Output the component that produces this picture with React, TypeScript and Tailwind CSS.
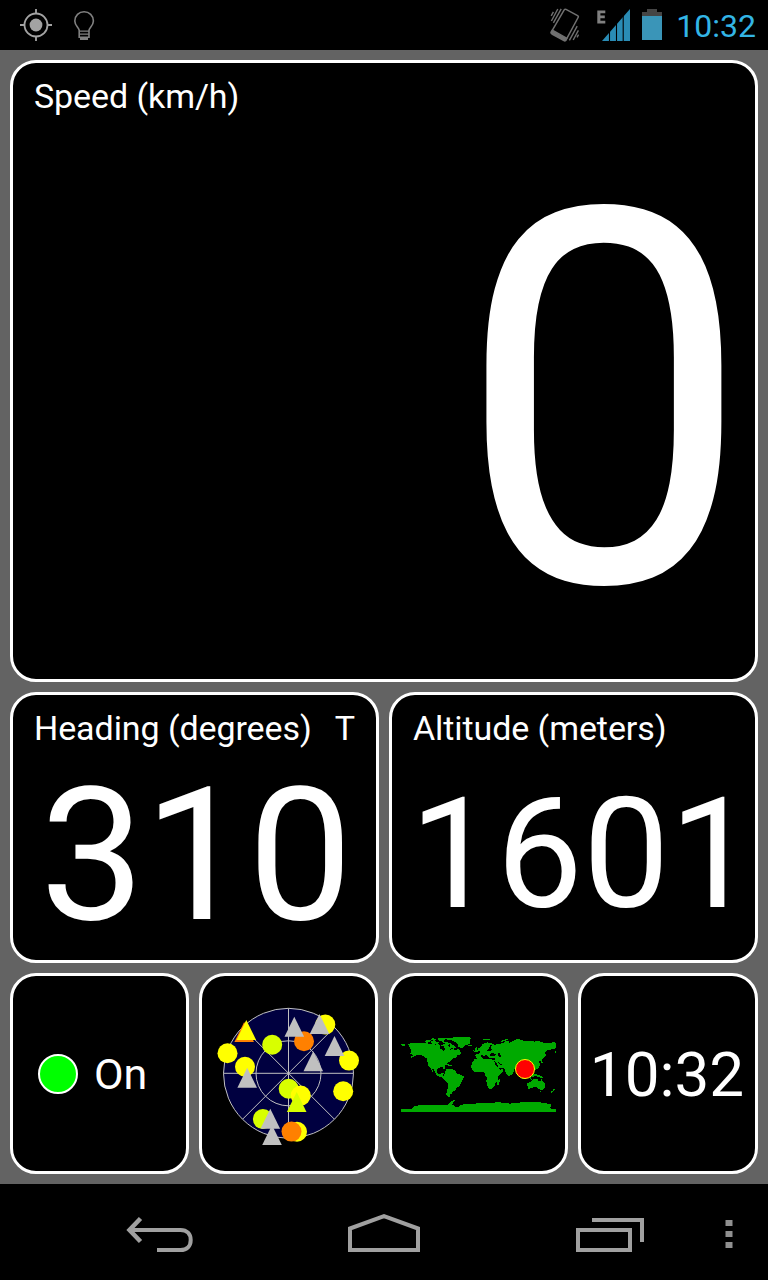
import React from 'react';
import { clsx } from 'clsx';

// --- Panel ---
interface PanelProps {
  children?: React.ReactNode;
  className?: string;
}

const Panel: React.FC<PanelProps> = ({ children, className = '' }) => (
  <section className={clsx('rounded-[26px] border-3 border-white bg-black', className)}>
    {children}
  </section>
);

const PanelLabel: React.FC<{ text: string; suffix?: string }> = ({ text, suffix }) => (
  <div className="flex justify-between pl-[21px] pr-[21px] pt-4 text-[34px] leading-none tracking-[-0.08px] whitespace-nowrap">
    <span>{text}</span>
    {suffix && <span>{suffix}</span>}
  </div>
);

// --- Status bar ---
const StatusBar: React.FC = () => (
  <header className="flex h-[50px] items-center bg-black pl-5 pr-3">
    <svg width="32" height="32" viewBox="0 0 32 32" fill="none" stroke="#a3a3a3" strokeWidth="1.8">
      <circle cx="16" cy="16" r="11.5" />
      <circle cx="16" cy="16" r="6.4" fill="#a3a3a3" stroke="none" />
      <path d="M16 0v5M16 27v5M0 16h5M27 16h5" />
    </svg>
    <svg className="ml-5" width="24" height="32" viewBox="0 0 24 32" fill="none" stroke="#808080" strokeWidth="1.6">
      <path d="M7.2 28.2V21.5C7.2 18.5 2.8 16.8 2.8 12a9.3 9.3 0 0 1 18.6 0C21.4 16.8 17 18.5 17 21.5V28.2z" />
      <path d="M7 22.2h10M7 25.2h10" strokeWidth="1.3" />
      <path d="M8 30h8" strokeWidth="2" />
    </svg>

    <div className="ml-auto flex items-center">
      <svg width="30" height="34" viewBox="0 0 30 34" fill="none" stroke="#707070" strokeWidth="1.5">
        <path d="M14.2 1.9Q14.9.8 16 1.4L27.6 7.6Q28.8 8.3 28.1 9.5L16.2 31.5Q15.4 32.8 14.1 32L2.3 25.4Q1 24.6 1.7 23.4z" />
        <path d="M2.3 22.2 16.8 30.2 15.7 32.4Q14.9 33.2 14 32.6L2 26Q.6 25 1.3 24z" fill="#707070" />
        <path d="M11.2.8 3.4 14.8M7.8 1 1.4 13M3.4 3.8 1.2 7.8M27.2 18.2 19.4 32.4M28.4 22.4 23.2 32M28.6 26.6 27 29.4" strokeWidth="1.4" />
      </svg>
      <svg className="ml-[17px]" width="34" height="34" viewBox="0 0 34 34">
        <path d="M.3 2.4h8v2.8H3.4V7.6H7.8v2.7H3.4v2.4H8.3v2.8h-8z" fill="#808080" />
        <path d="M33 1v32H5z" fill="#2a8cb5" />
        <path d="M12.5 20v13M19.5 14v19M26.2 7v26" stroke="#000" strokeWidth="1.1" />
      </svg>
      <svg className="ml-[11px]" width="20" height="32" viewBox="0 0 20 32">
        <path d="M5 0h10v3h5v5H0V3h5z" fill="#454545" />
        <path d="M0 7h20v24H0z" fill="#3a95b8" />
      </svg>
      <span className="ml-[14px] mt-px text-[32px] leading-none text-[#33b5e5]">10:32</span>
    </div>
  </header>
);

// --- Satellite radar ---
const blips = [
  { x: -61, y: -20, fill: '#ffff00' },
  { x: -43.5, y: -6.5, fill: '#ffff00' },
  { x: -16.3, y: -28.5, fill: '#d8ff00' },
  { x: 15.5, y: -32, fill: '#ff8000' },
  { x: 36.8, y: -48.7, fill: '#ffff00' },
  { x: 60.5, y: -12.7, fill: '#ffff00' },
  { x: 54.7, y: 18, fill: '#ffff00' },
  { x: 0.2, y: 15.4, fill: '#d8ff00' },
  { x: 12.2, y: 22.3, fill: '#ffff00' },
  { x: -25.6, y: 45.8, fill: '#d8ff00' },
  { x: 8.5, y: 58.5, fill: '#ffff00' },
  { x: 3, y: 58.3, fill: '#ff8000' },
];

// y is the apex of the triangle
const markers = [
  { x: -44.3, y: -51.3, fill: '#ff8000' },
  { x: -42.2, y: -53.3, fill: '#ffff00' },
  { x: 5.8, y: -56.6, fill: '#c0c0c0' },
  { x: 31, y: -59.3, fill: '#c0c0c0' },
  { x: 46, y: -37.3, fill: '#c0c0c0' },
  { x: 24.8, y: -22, fill: '#c0c0c0' },
  { x: -41.3, y: -5.6, fill: '#c0c0c0' },
  { x: 8.2, y: 18.8, fill: '#d8ff00' },
  { x: -18.2, y: 35.4, fill: '#c0c0c0' },
  { x: -16.5, y: 51.6, fill: '#c0c0c0' },
];

const Radar: React.FC = () => (
  <svg width="144" height="144" viewBox="-71.5 -71.3 144 144">
    <g stroke="#c0c0c0" strokeWidth="1" fill="none">
      <circle r="65" fill="#000040" />
      <circle r="32.5" />
      <path d="M0-65V65M-65 0H65M-46-46 46 46M-46 46 46-46" />
    </g>
    {blips.map((b, i) => (
      <circle key={i} cx={b.x} cy={b.y} r="10" fill={b.fill} />
    ))}
    {markers.map((m, i) => (
      <path key={i} d="M0 0 9.8 20H-9.8z" transform={`translate(${m.x} ${m.y})`} fill={m.fill} />
    ))}
  </svg>
);

// --- World map ---
const WorldMap: React.FC = () => (
  <svg width="155" height="76" viewBox="33 48 465 228">
    <g fill="#00aa00" shapeRendering="crispEdges">
      {/* North America */}
      <path d="M33 72h12v5h-9zM54 72l15-4h40l6 3h12l9 3 9-2 6 5 9-4 8-5 12 3-6 6 10 6-4 8 8-5 10 6 5-6 8 8 3 8-13 5-3 7-12 2-4 8-10 5-6 8-3 12-5-7-14 1-4 7 3 12 9 1 4-5 6 1-5 7 9 2 3 8 10 1-4 4-12-2-5-6-17-6-4-8-7-12-3 1 5 10-4-2-7-14-7-6-3-20-13-9-15-3-10 5-9 5-2-3 8-6-9-4 4-5z" />
      <path d="M106 63l8-4 9 2-4 5-12 3zM124 62l12-1 2 5 9 1-3 5-17 0-4-5zM125 55l15 1-3 4-13 0zM144 54l24-1 10 3-13 2-5 5-16-2zM157 64l12 1 12 5 11 7 6 6-7 3-9-4-3-9-12-2-10-5zM174 79l8 2-3 5-8-3zM183 94l13-1 3 5-13 1z" />
      <path d="M168 54l27-2 46 0 2 4-5 4 4 6-5 7-10 3-7 7-5 1-9-3-4-9-5-6-10-4-17-4z" />
      <path d="M234 74l9 0 4 2-4 3-9-1zM160 131l9-2 10 5-3 3-7-3-8 1zM178 136h10l-3 3h-7z" />
      {/* South America */}
      <path d="M168 147H186L195 151 200 160 212 164 221 169 220 177 213 187 210 198 201 203 194 213 187 216 184 222 179 223 180 231 171 229 168 224 172 212 174 190 165 180 161 168 165 158z" />
      {/* Europe and Asia */}
      <path d="M255 104l11-2 5-7-8-3 1-7 9-3 5-10 13-5 14 3 9 4 12-2 16-3 3-5 10-2 3 6 12-6 18-4 14 4 20 1 22 3 27 3 22-2 5 4h26v10l-17 3-4 8-5 10-3-5 6-13-14 4-16 2-6 8 3 9-8 9-4 4 3 9-4 0-4-6-5 0 5 11-6 12-13 5-2 5 7 9-6 7-6-4-2 6 8 13-9-8-4-15-5-10-9 0-5 9-3 10-4-3-7-19-12-3-6 0 6 5-6 10-13 6-9-17-3-9h-17l-4-8-6 1 4 9-7-7-9-5-5 3-7-1-2 8-8 3-8-2z" />
      <path d="M255 84l5-3 2 7 5 6-9 3-5-2 4-5zM253 89l-5 4 4 1zM279 57h20v3h-20zM329 66l7-4 15-5 5 2-16 5-7 4zM377 58l9 0 3 3-11 0zM436 64l12 0 3 3-13 0zM438 97l5 10-3 2-5-8zM429 116l8-4 8-3 3-6 4 1-4 8-10 4-9 3zM421 124h3v6h-3zM369 144l4 3-2 6-3-3z" />
      {/* Africa */}
      <path d="M253 118l14-4 13 0 2 5 8 3 17-1 6 2 10 20 6 6 11-1-3 9-14 15 0 10-6 6-2 9-9 9-9 1-5-10-3-14 2-8-7-12-1-6-15-1-11 1-9-6-5-9 2-11zM323 181l7-4 1 5-6 13-4-2 0-8z" />
      {/* Islands and Australia */}
      <path d="M379 158l8 5 6 10-5-2-8-8zM395 172l13 2-2 3-12-2zM396 161l9-5 2 6-4 8-7-2zM410 162l5 2-3 9-3-4zM421 163l9 0 4-2 13 4 8 4 5 6-7-1-9-4-9-2-5-4-7 0z" />
      <path d="M412 190L422 185 428 178 436 176 444 177 443 182 450 185 454 176 458 185 465 192 466 200 460 209 452 210 445 206 439 201 426 203 416 207 413 203zM449 213h6l-2 5-4-2zM490 206l5 2-3 5-4-2zM486 213l3 2-5 4-2-2z" />
      {/* Antarctica */}
      <path d="M33 267h31l6-7 11-3 19-3 25 1 25-1 17 2 10-4 5-7 9-5 4 2-6 5-2 7 8 5-5 4 15-3 9-5 14-4 18 1 18-2 36-1 19-2 27 1 14 3 13-2 22-2 18-1 37 1 18 3 15 3-1 6-3 5 8 3h18v9H33z" />
    </g>
    {/* Inland seas */}
    <g fill="#000" shapeRendering="crispEdges">
      <path d="M151 78l10 1 5 7-4 8-5-5-6-2zM291 92l7-8 3-9 5-1-5 10 5 5-5 3-8 2zM271 107l6-2 5 5 5-2-4-7 11 9 8 5 12-1v5l-18-1-14-1-8-5zM300 102l8-3 10 4-4 4-13 0zM323 99l6 0 5 13-7-1zM313 121l5 6 7 13-3 2-8-11zM324 124l8 8 7 2-3 3-10-7z" />
    </g>
    <circle cx="405" cy="147" r="28.5" fill="#ff0000" stroke="#ffff00" strokeWidth="3" />
  </svg>
);

// --- Navigation bar ---
const NavBar: React.FC = () => (
  <nav className="flex h-24 items-center bg-black pl-[126px] pr-[35px]">
    <svg width="68" height="40" viewBox="0 0 68 40" fill="none" stroke="#a0a0a0" strokeWidth="4">
      <path d="M4 18H54.5C61 18 64.7 22 64.7 28S61 38 54.5 38H31" />
      <path d="M14.5 6.5 3.5 18 14.5 29.5" strokeWidth="4.5" />
    </svg>
    <svg className="ml-[154px]" width="72" height="40" viewBox="0 0 72 40" fill="none" stroke="#a0a0a0" strokeWidth="4">
      <path d="M2 38V16.5L36 4.2l34 12.3V38z" />
    </svg>
    <svg className="ml-[156px]" width="68" height="40" viewBox="0 0 68 40" fill="none" stroke="#a0a0a0" strokeWidth="4">
      <path d="M2 18h52v20H2zM16 8h50v22" />
    </svg>
    <svg className="mt-[3px] ml-auto" width="8" height="30" viewBox="0 0 8 30" fill="#909090">
      <path d="M.5 1h7v6h-7zM.5 12h7v6h-7zM.5 23h7v6h-7z" />
    </svg>
  </nav>
);

export default function App() {
  return (
    <div className="flex h-[1280px] w-[768px] flex-col overflow-hidden bg-[#636363] font-[Roboto,sans-serif] text-white">
      <StatusBar />
      <main className="flex flex-1 flex-col gap-2.5 p-2.5">
        <Panel className="h-[622px]">
          <PanelLabel text="Speed (km/h)" />
          <div className="mt-[28px] pr-[4px] text-right text-[523px] leading-none">0</div>
        </Panel>

        <div className="grid h-[271px] grid-cols-2 gap-2.5">
          <Panel>
            <PanelLabel text="Heading (degrees)" suffix="T" />
            <div className="mt-[17px] pr-[24px] text-right text-[186px] leading-none tracking-[-0.5px]">310</div>
          </Panel>
          <Panel>
            <PanelLabel text="Altitude (meters)" />
            <div className="mt-[33px] -mr-px text-right text-[154px] leading-none">1601</div>
          </Panel>
        </div>

        <div className="grid h-[201px] grid-cols-[179px_179px_179px_180px] justify-between">
          <Panel className="flex items-center pl-[25px]">
            <span className="size-10 rounded-full border-2 border-white bg-[#00ff00]" />
            <span className="ml-4 mt-px text-[43px] leading-none">On</span>
          </Panel>
          <Panel className="flex items-center justify-center">
            <Radar />
          </Panel>
          <Panel className="flex items-center justify-center">
            <WorldMap />
          </Panel>
          <Panel className="flex items-center justify-center">
            <span className="mt-0.5 mr-[2px] text-[62px] leading-none">10:32</span>
          </Panel>
        </div>
      </main>
      <NavBar />
    </div>
  );
}
